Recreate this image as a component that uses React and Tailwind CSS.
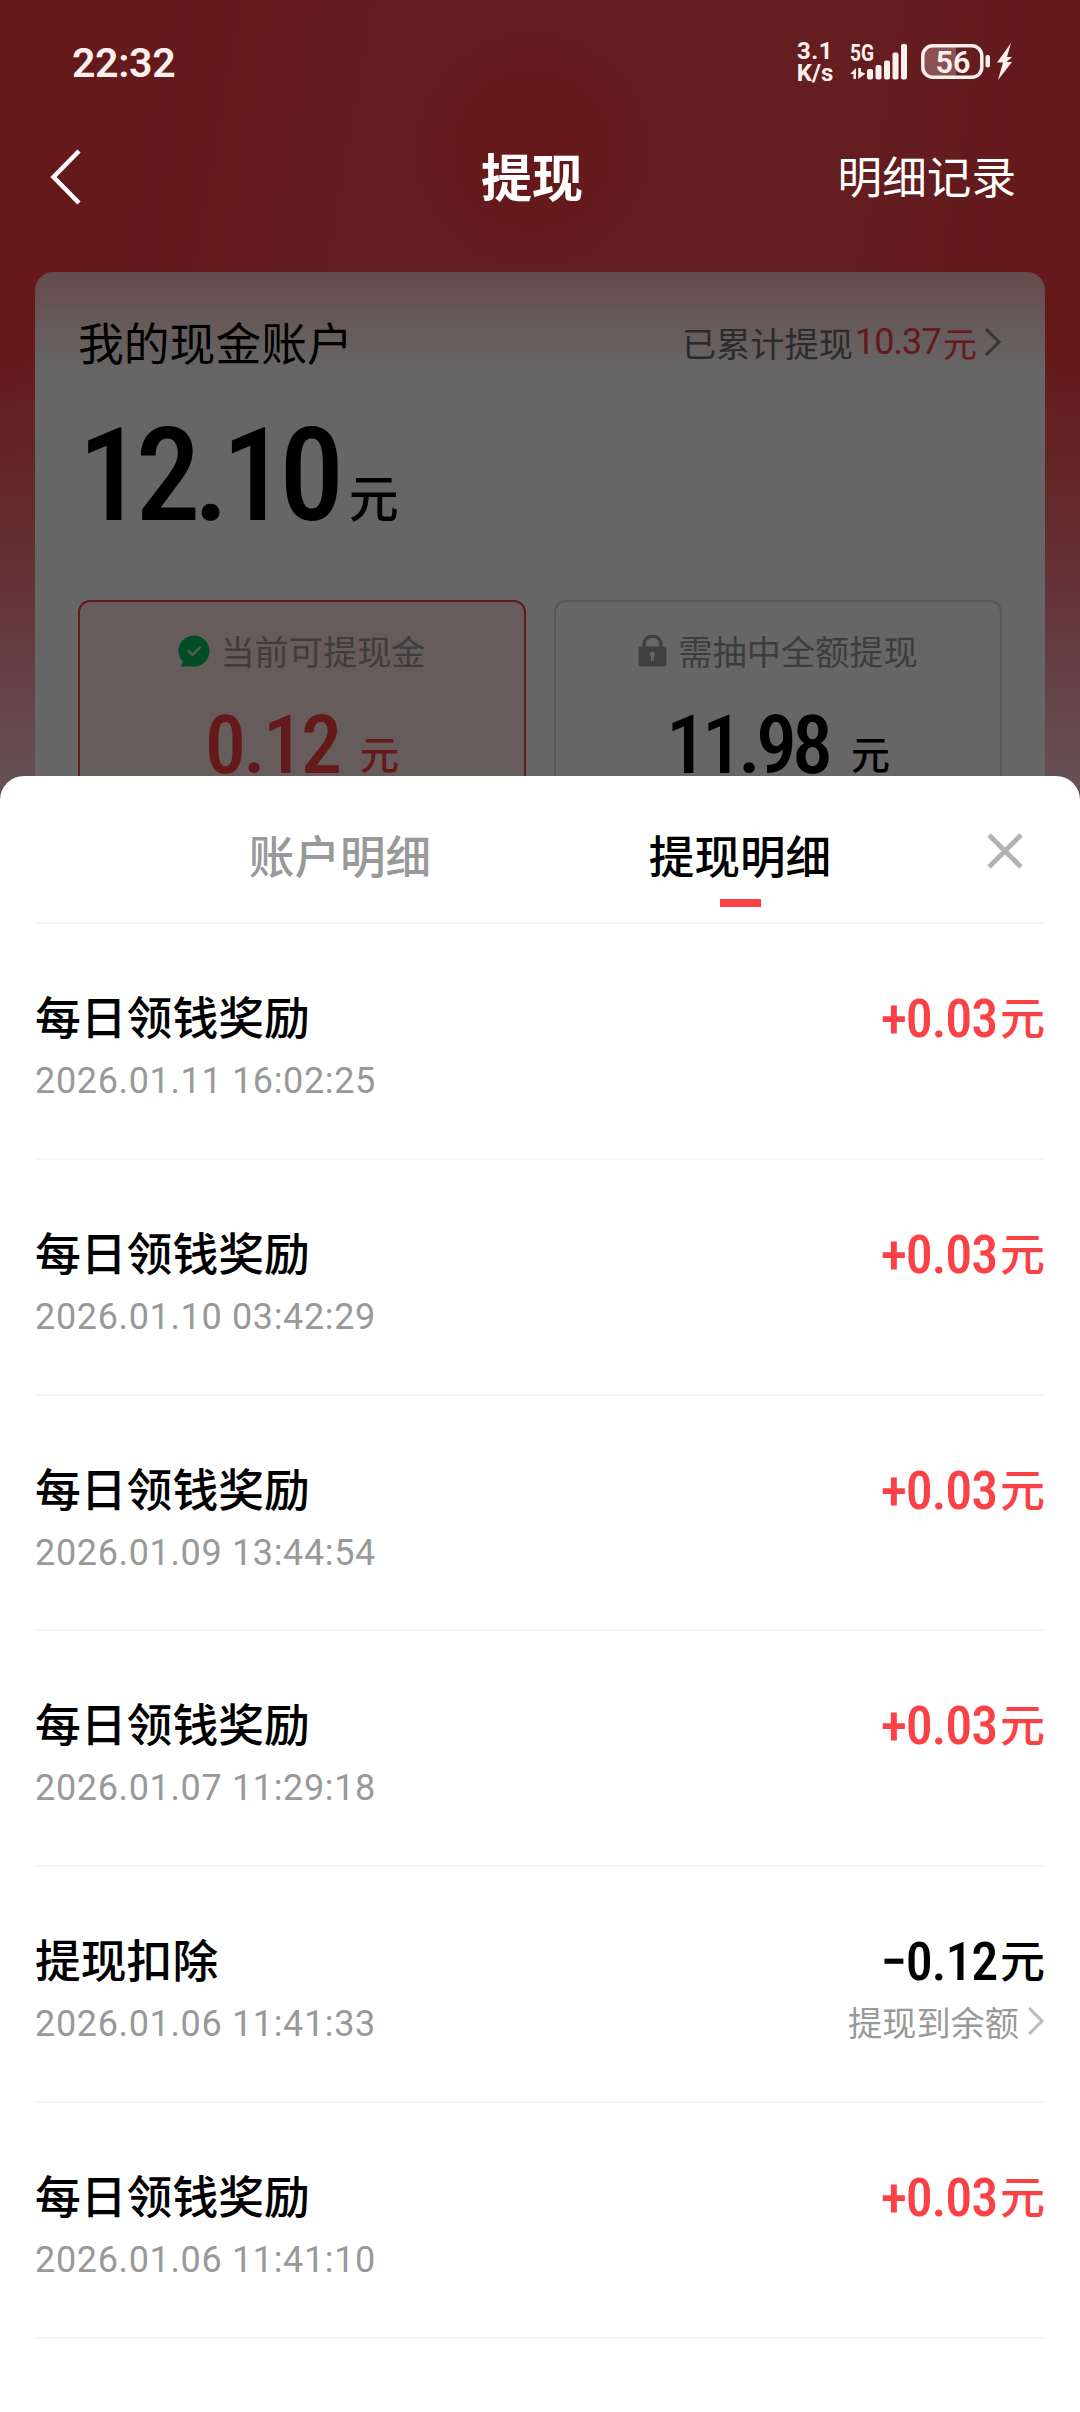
const records = [
  { id: 1, title: "每日领钱奖励", time: "2026.01.11 16:02:25", amount: "+0.03" },
  { id: 2, title: "每日领钱奖励", time: "2026.01.10 03:42:29", amount: "+0.03" },
  { id: 3, title: "每日领钱奖励", time: "2026.01.09 13:44:54", amount: "+0.03" },
  { id: 4, title: "每日领钱奖励", time: "2026.01.07 11:29:18", amount: "+0.03" },
  { id: 5, title: "提现扣除", time: "2026.01.06 11:41:33", amount: "−0.12", note: "提现到余额" },
  { id: 6, title: "每日领钱奖励", time: "2026.01.06 11:41:10", amount: "+0.03" },
];

function Chevron({ className }) {
  return (
    <svg viewBox="0 0 18 30" className={className} fill="none" stroke="currentColor" strokeWidth="3">
      <path d="M2 2 L15 15 L2 28" />
    </svg>
  );
}

function StatusBar() {
  return (
    <div className="flex h-[124px] items-center justify-between pl-[72px] pr-[67px] font-['Roboto','Noto_Sans',sans-serif] text-[#fff0ee]">
      <span className="pt-[2px] text-[41px] font-semibold leading-[50px] tracking-[-0.3px]">22:32</span>
      <div className="flex items-center">
        <div className="flex w-[40px] flex-col items-center text-[24px] font-bold leading-[22px]">
          <span className="tracking-[0.5px]">3.1</span>
          <span>K/s</span>
        </div>
        <svg width="60" height="50" viewBox="0 -6 60 50" className="ml-[15px]" fill="currentColor">
          <text x="0" y="18" fontSize="24" fontWeight="700" textLength="24" lengthAdjust="spacingAndGlyphs">
            5G
          </text>
          <path d="M0 31 L6 25 V36 H3.4 V31 Z" />
          <path d="M8.2 25 H11 V29 L15.5 30.5 L8.2 36 Z" />
          <rect x="17" y="26" width="6" height="10.5" rx="2" />
          <rect x="25.5" y="22" width="6" height="14.5" rx="2" />
          <rect x="34" y="17.5" width="6" height="19" rx="2" />
          <rect x="42.5" y="9.5" width="6" height="27" rx="2" />
          <rect x="51" y="1" width="6" height="35.5" rx="2" />
        </svg>
        <svg width="93" height="38" viewBox="0 0 93 38" className="ml-[10px]" fill="currentColor">
          <path d="M14 3 H36 V34 H14 Q4 34 4 25 V12 Q4 3 14 3 Z" opacity="0.25" />
          <rect x="2.8" y="2.8" width="59" height="31.5" rx="10" fill="none" stroke="currentColor" strokeWidth="3.5" />
          <text x="15.5" y="29.5" fontSize="31" fontWeight="600" textLength="35" lengthAdjust="spacingAndGlyphs">
            56
          </text>
          <rect x="65.5" y="12" width="4.5" height="12.5" rx="2" />
          <path d="M91 0 L77 19.5 H83 L78 37 L92 19 H86.5 L92 14 H87 Z" />
        </svg>
      </div>
    </div>
  );
}

function NavBar() {
  return (
    <div className="grid h-[108px] grid-cols-3 items-center pl-[48px] pr-[64px] text-white">
      <svg width="34" height="58" viewBox="0 0 34 58" fill="none" stroke="currentColor" strokeWidth="4.5" className="mb-[3px]">
        <path d="M31 3 L5.5 29 L31 55" />
      </svg>
      <h1 className="mb-[6px] text-center text-[51px] font-bold leading-[60px]">提现</h1>
      <span className="mb-[7px] whitespace-nowrap text-right text-[44.6px] leading-[60px]">明细记录</span>
    </div>
  );
}

function AccountCard() {
  return (
    <div className="mx-[35px] mt-[40px] h-[620px] rounded-[18px] bg-white bg-linear-to-b from-[#ffbcbc] to-white to-[98px] px-[43px]">
      <div className="flex items-center justify-between pt-[36px] leading-[64px]">
        <h2 className="text-[45.8px] text-black">我的现金账户</h2>
        <div className="flex items-center pt-[2px] text-[34.2px] text-[#6c6c6c]">
          <span>已累计提现</span>
          <span className="pl-[2px] font-['Roboto',sans-serif] text-[36px] tracking-[-0.9px] text-[#fa3f44]">10.37</span>
          <span className="pl-[2px] text-[#fa3f44]">元</span>
          <Chevron className="ml-[7px] h-[30px] w-[18px] text-[#888]" />
        </div>
      </div>
      <div className="flex h-[226px] items-baseline pt-[12px] text-black">
        <span className="font-['Roboto',sans-serif] text-[130px] font-medium leading-[180px] tracking-[-7.5px] [font-stretch:75%]">
          12.10
        </span>
        <span className="relative -top-[3px] pl-[12px] text-[50px] font-medium">元</span>
      </div>
      <div className="grid grid-cols-2 gap-[28px]">
        <div className="h-[240px] rounded-[12px] border-2 border-[#fa3f44] bg-[#ffe7e7] pt-[22px] text-center">
          <div className="flex items-center justify-center text-[34.2px] leading-[52px] text-[#999]">
            <svg width="32" height="32" viewBox="0 0 32 32" className="mr-[10px] mt-[2px]">
              <path d="M16 0.5 A15.5 15.5 0 1 1 16 31.5 H3 L5 27 A15.5 15.5 0 0 1 16 0.5 Z" fill="#07c160" />
              <path d="M10 15.5 L14.5 20 L22.5 12" fill="none" stroke="#e2e2e2" strokeWidth="2.4" />
            </svg>
            <span>当前可提现金</span>
          </div>
          <div className="flex items-baseline justify-center pt-[3px] text-[#fa3f44]">
            <span className="font-['Roboto',sans-serif] text-[82px] font-medium leading-[132px] tracking-[-3px] [font-stretch:75%]">
              0.12
            </span>
            <span className="relative -top-[4px] pl-[21px] text-[39px] font-medium">元</span>
          </div>
        </div>
        <div className="h-[240px] rounded-[12px] border-2 border-[#dadada] pt-[22px] text-center">
          <div className="flex items-center justify-center text-[34.2px] leading-[52px] text-[#999]">
            <svg width="29" height="32" viewBox="0 0 29 32" className="mr-[11px] mt-[2px]" fill="#a0a0a0">
              <path d="M6 12 V9.5 A8.5 8.5 0 0 1 23 9.5 V12" fill="none" stroke="#a0a0a0" strokeWidth="3.5" />
              <rect x="0.5" y="11.5" width="28" height="20" rx="2" />
              <path d="M14.5 16.5 a2.8 2.8 0 0 1 1.5 5 V26 h-3 V21.5 a2.8 2.8 0 0 1 1.5 -5 Z" fill="#fff" />
            </svg>
            <span>需抽中全额提现</span>
          </div>
          <div className="flex items-baseline justify-center pt-[3px] text-black">
            <span className="font-['Roboto',sans-serif] text-[82px] font-medium leading-[132px] tracking-[-5px] [font-stretch:75%]">
              11.98
            </span>
            <span className="relative -top-[4px] pl-[23px] text-[39px] font-medium">元</span>
          </div>
        </div>
      </div>
    </div>
  );
}

function RecordRow({ record }) {
  const isIncome = record.amount.startsWith("+");
  return (
    <li className="flex h-[235.8px] justify-between border-b-2 border-[#f6f6f6] pt-[61px]">
      <div>
        <p className="text-[45.8px] font-medium leading-[60px] text-black">{record.title}</p>
        <p className="mt-[11px] font-['Roboto',sans-serif] text-[36px] leading-[50px] tracking-[0.65px] text-[#999]">
          {record.time}
        </p>
      </div>
      <div className="flex flex-col items-end pt-px">
        <p className={isIncome ? "flex items-baseline text-[#f94146]" : "flex items-baseline text-black"}>
          <span className="font-['Roboto',sans-serif] text-[54px] font-medium leading-[66px] tracking-[-1.2px] [font-stretch:75%]">
            {record.amount}
          </span>
          <span className="relative -top-[2px] pl-[3px] text-[45px] font-medium leading-[60px]">元</span>
        </p>
        {record.note && (
          <p className="flex items-center text-[34.2px] leading-[52px] text-[#999]">
            {record.note}
            <Chevron className="ml-[8px] h-[30px] w-[18px] text-[#bbb]" />
          </p>
        )}
      </div>
    </li>
  );
}

function RecordSheet() {
  return (
    <div className="absolute inset-x-0 bottom-0 top-[776px] z-20 rounded-t-[24px] bg-white px-[35px]">
      <div className="relative flex h-[148px] border-b-2 border-[#f6f6f6] px-[105px] text-[45.6px] font-medium leading-[60px]">
        <div className="flex flex-1 justify-center pt-[48px] text-[#999]">账户明细</div>
        <div className="flex flex-1 flex-col items-center pt-[48px] text-black">
          提现明细
          <span className="mt-[15px] h-[8px] w-[41px] bg-[#f94146]" />
        </div>
        <svg
          width="36"
          height="36"
          viewBox="0 0 36 36"
          className="absolute right-[22px] top-[57px]"
          stroke="#b2b2b2"
          strokeWidth="4.8"
        >
          <path d="M2 2 L34 34 M34 2 L2 34" />
        </svg>
      </div>
      <ul>
        {records.map((record) => (
          <RecordRow key={record.id} record={record} />
        ))}
      </ul>
    </div>
  );
}

function App() {
  return (
    <div className="relative h-[2412px] w-[1080px] overflow-hidden bg-[linear-gradient(180deg,transparent_340px,#f87d87_580px,#ffc8d4_776px),radial-gradient(circle_at_532px_150px,#fd3f43_40px,transparent_130px),linear-gradient(100deg,#fd3b3e_0px,#f94d52_420px,#f94d52_860px,#fd3b3e_1120px)] font-['Noto_Sans_CJK_SC',sans-serif]">
      {/* stays bright above the dimmed page */}
      <div className="relative z-10">
        <StatusBar />
        <NavBar />
      </div>
      <AccountCard />
      <div className="absolute inset-0 bg-black/60" />
      <RecordSheet />
    </div>
  );
}

export default App;
